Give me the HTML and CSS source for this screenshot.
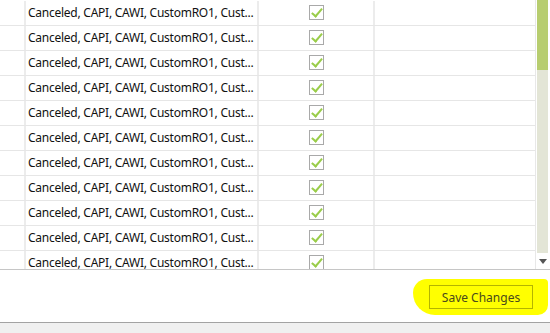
FILE: index.html
```html
<!DOCTYPE html>
<html lang="en">
<head>
    <meta charset="UTF-8">
    <title>Modes</title>
    <link rel="stylesheet" href="styles.css">
</head>
<body>
    <div class="grid">
        <div class="rows">
            <div class="row"><div class="c0"></div><div class="c1">Canceled, CAPI, CAWI, CustomRO1, Cust...</div><div class="c2"><span class="check"></span></div><div class="c3"></div></div>
            <div class="row"><div class="c0"></div><div class="c1">Canceled, CAPI, CAWI, CustomRO1, Cust...</div><div class="c2"><span class="check"></span></div><div class="c3"></div></div>
            <div class="row"><div class="c0"></div><div class="c1">Canceled, CAPI, CAWI, CustomRO1, Cust...</div><div class="c2"><span class="check"></span></div><div class="c3"></div></div>
            <div class="row"><div class="c0"></div><div class="c1">Canceled, CAPI, CAWI, CustomRO1, Cust...</div><div class="c2"><span class="check"></span></div><div class="c3"></div></div>
            <div class="row"><div class="c0"></div><div class="c1">Canceled, CAPI, CAWI, CustomRO1, Cust...</div><div class="c2"><span class="check"></span></div><div class="c3"></div></div>
            <div class="row"><div class="c0"></div><div class="c1">Canceled, CAPI, CAWI, CustomRO1, Cust...</div><div class="c2"><span class="check"></span></div><div class="c3"></div></div>
            <div class="row"><div class="c0"></div><div class="c1">Canceled, CAPI, CAWI, CustomRO1, Cust...</div><div class="c2"><span class="check"></span></div><div class="c3"></div></div>
            <div class="row"><div class="c0"></div><div class="c1">Canceled, CAPI, CAWI, CustomRO1, Cust...</div><div class="c2"><span class="check"></span></div><div class="c3"></div></div>
            <div class="row"><div class="c0"></div><div class="c1">Canceled, CAPI, CAWI, CustomRO1, Cust...</div><div class="c2"><span class="check"></span></div><div class="c3"></div></div>
            <div class="row"><div class="c0"></div><div class="c1">Canceled, CAPI, CAWI, CustomRO1, Cust...</div><div class="c2"><span class="check"></span></div><div class="c3"></div></div>
            <div class="row"><div class="c0"></div><div class="c1">Canceled, CAPI, CAWI, CustomRO1, Cust...</div><div class="c2"><span class="check"></span></div><div class="c3"></div></div>
        </div>
        <div class="scrollbar">
            <div class="track"><div class="thumb"></div></div>
            <div class="arrow"></div>
        </div>
    </div>
    <div class="footer">
        <div class="highlight"></div>
        <button class="save">Save Changes</button>
    </div>
    <div class="status"></div>
</body>
</html>
```

FILE: styles.css
```css
body {
    margin: 0;
    font-family: "Noto Sans", "Open Sans", sans-serif;
    font-size: 12px;
    color: #111;
    background: #fff;
    width: 550px;
    height: 333px;
    overflow: hidden;
}
.grid {
    display: flex;
    height: 269px;
    border-bottom: 1px solid #c6c6c6;
    overflow: hidden;
}
.rows {
    width: 536px;
    padding-top: 1px;
    border-right: 1px solid #e8e8e8;
    box-sizing: border-box;
    overflow: hidden;
}
.row {
    display: flex;
    height: 25px;
    border-bottom: 1px solid #e6e6e6;
    box-sizing: border-box;
}
.row > div {
    border-right: 2px solid #ececec;
    box-sizing: border-box;
    height: 100%;
}
.c0 {
    width: 26px;
}
.c1 {
    width: 233px;
    padding-left: 2px;
    line-height: 23px;
    white-space: nowrap;
    overflow: hidden;
    letter-spacing: -0.25px;
}
.c2 {
    width: 116px;
    display: flex;
    align-items: center;
    justify-content: center;
}
.c3 {
    flex: 1;
    border-right: none !important;
}
.check {
    width: 15px;
    height: 15px;
    border: 1px solid #a9a9a9;
    box-sizing: border-box;
    position: relative;
    margin-left: 1px;
    margin-bottom: 2px;
}
.check::after {
    content: "";
    position: absolute;
    left: 4px;
    top: 0px;
    width: 4px;
    height: 9px;
    border-right: 2px solid #9acd4a;
    border-bottom: 2px solid #9acd4a;
    transform: rotate(40deg);
}
.scrollbar {
    width: 14px;
    display: flex;
    flex-direction: column;
    padding: 0 2px 0 1px;
    box-sizing: border-box;
}
.track {
    height: 253px;
    background: #e3e5d6;
}
.thumb {
    height: 70px;
    background: #b7cd6f;
}
.arrow {
    margin: 6px auto 0;
    width: 0;
    height: 0;
    border-left: 4px solid transparent;
    border-right: 4px solid transparent;
    border-top: 5px solid #555;
}
.footer {
    position: relative;
    height: 52px;
    display: flex;
    justify-content: flex-end;
    align-items: center;
    padding-right: 17px;
    border-bottom: 1px solid #a3a3a3;
}
.highlight {
    position: absolute;
    left: 413px;
    top: 9px;
    width: 135px;
    height: 36px;
    background: #ffff00;
    border-radius: 14px 4px 10px 22px;
}
.save {
    position: relative;
    width: 104px;
    height: 24px;
    margin-top: 2px;
    background: transparent;
    border: 1px solid #b4b400;
    font-family: "Noto Sans", "Open Sans", sans-serif;
    font-size: 12px;
    color: #4a4a1c;
    padding: 0;
}
.status {
    background: #f0f0f0;
    height: 10px;
}
```
